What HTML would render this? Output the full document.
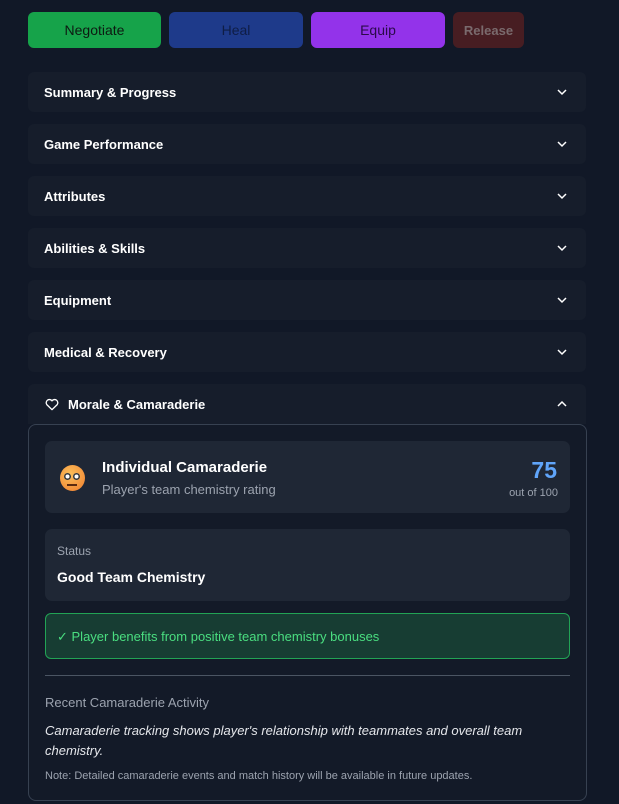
<!DOCTYPE html>
<html><head><style>
*{box-sizing:border-box;margin:0;padding:0}
body{width:619px;height:804px;background:#111827;font-family:"Liberation Sans",sans-serif;position:relative;overflow:hidden;color:#fff}
.btn{position:absolute;top:12px;height:36px;border-radius:6px;font-size:14px;display:flex;align-items:center;justify-content:center}
.acc{position:absolute;left:28px;width:558px;height:40px;background:#161d2b;border-radius:6px;font-size:13px;font-weight:bold;display:flex;align-items:center;padding-left:16px}
.chev{position:absolute;right:18px;top:14px}
.abs{position:absolute}
</style></head><body>
<div class="btn" style="left:28px;width:133px;background:#16a34a;color:#0d1a12">Negotiate</div>
<div class="btn" style="left:169px;width:134px;background:#1e3a8a;color:#0f1d45">Heal</div>
<div class="btn" style="left:311px;width:134px;background:#9333ea;color:#2a0a4a">Equip</div>
<div class="btn" style="left:453px;width:71px;background:#471d22;color:#7a6a6d;font-weight:bold;font-size:13px">Release</div>

<div class="acc" style="top:72px">Summary &amp; Progress<svg class="chev" width="12" height="12" viewBox="0 0 12 12"><path d="M2 4l4 4 4-4" fill="none" stroke="#fff" stroke-width="1.5"/></svg></div>
<div class="acc" style="top:124px">Game Performance<svg class="chev" width="12" height="12" viewBox="0 0 12 12"><path d="M2 4l4 4 4-4" fill="none" stroke="#fff" stroke-width="1.5"/></svg></div>
<div class="acc" style="top:176px">Attributes<svg class="chev" width="12" height="12" viewBox="0 0 12 12"><path d="M2 4l4 4 4-4" fill="none" stroke="#fff" stroke-width="1.5"/></svg></div>
<div class="acc" style="top:228px">Abilities &amp; Skills<svg class="chev" width="12" height="12" viewBox="0 0 12 12"><path d="M2 4l4 4 4-4" fill="none" stroke="#fff" stroke-width="1.5"/></svg></div>
<div class="acc" style="top:280px">Equipment<svg class="chev" width="12" height="12" viewBox="0 0 12 12"><path d="M2 4l4 4 4-4" fill="none" stroke="#fff" stroke-width="1.5"/></svg></div>
<div class="acc" style="top:332px">Medical &amp; Recovery<svg class="chev" width="12" height="12" viewBox="0 0 12 12"><path d="M2 4l4 4 4-4" fill="none" stroke="#fff" stroke-width="1.5"/></svg></div>
<div class="acc" style="top:384px;border-radius:6px 6px 0 0"><svg width="16" height="16" viewBox="0 0 24 24" style="margin-right:8px"><path d="M12 20.5l-7.8-7.6a4.8 4.8 0 0 1 7.8-5.6 4.8 4.8 0 0 1 7.8 5.6z" fill="none" stroke="#fff" stroke-width="2" stroke-linejoin="round"/></svg>Morale &amp; Camaraderie<svg class="chev" width="12" height="12" viewBox="0 0 12 12"><path d="M2 8l4-4 4 4" fill="none" stroke="#fff" stroke-width="1.5"/></svg></div>

<div class="abs" style="left:28px;top:424px;width:559px;height:377px;border:1px solid #374151;border-radius:8px;background:#131a28"></div>
<div class="abs" style="left:45px;top:441px;width:525px;height:72px;background:#1f2735;border-radius:7px"></div>
<div class="abs" style="left:60px;top:465px;width:25px;height:26px;border-radius:50%;background:radial-gradient(circle at 40% 35%,#fbbf5a,#ef7d2e)"></div>
<div class="abs" style="left:64px;top:473px;width:7px;height:7px;border-radius:50%;background:#fff;box-shadow:inset 0 0 0 1.5px #333"></div>
<div class="abs" style="left:73px;top:473px;width:7px;height:7px;border-radius:50%;background:#fff;box-shadow:inset 0 0 0 1.5px #333"></div>
<div class="abs" style="left:67px;top:484px;width:10px;height:2px;background:#5a2a10"></div>
<div class="abs" style="left:102px;top:459px;font-size:15px;font-weight:bold">Individual Camaraderie</div>
<div class="abs" style="left:102px;top:482px;font-size:13px;color:#9ca3af">Player's team chemistry rating</div>
<div class="abs" style="right:62px;top:457px;font-size:23px;font-weight:bold;color:#60a5fa">75</div>
<div class="abs" style="right:61px;top:487px;font-size:11px;color:#9ca3af">out of 100</div>

<div class="abs" style="left:45px;top:529px;width:525px;height:72px;background:#1f2735;border-radius:7px"></div>
<div class="abs" style="left:57px;top:544px;font-size:12px;color:#9ca3af">Status</div>
<div class="abs" style="left:57px;top:569px;font-size:14px;font-weight:bold">Good Team Chemistry</div>

<div class="abs" style="left:45px;top:613px;width:525px;height:46px;background:#173d33;border:1px solid #22a355;border-radius:6px"></div>
<div class="abs" style="left:57px;top:629px;font-size:13px;color:#4ade80">✓ Player benefits from positive team chemistry bonuses</div>

<div class="abs" style="left:45px;top:675px;width:525px;height:1px;background:#4b5563"></div>
<div class="abs" style="left:45px;top:695px;font-size:13px;color:#9ca3af">Recent Camaraderie Activity</div>
<div class="abs" style="left:45px;top:721px;width:520px;font-size:13px;line-height:20px;font-style:italic;color:#e5e7eb">Camaraderie tracking shows player's relationship with teammates and overall team chemistry.</div>
<div class="abs" style="left:45px;top:770px;font-size:11px;color:#9ca3af">Note: Detailed camaraderie events and match history will be available in future updates.</div>
</body></html>
